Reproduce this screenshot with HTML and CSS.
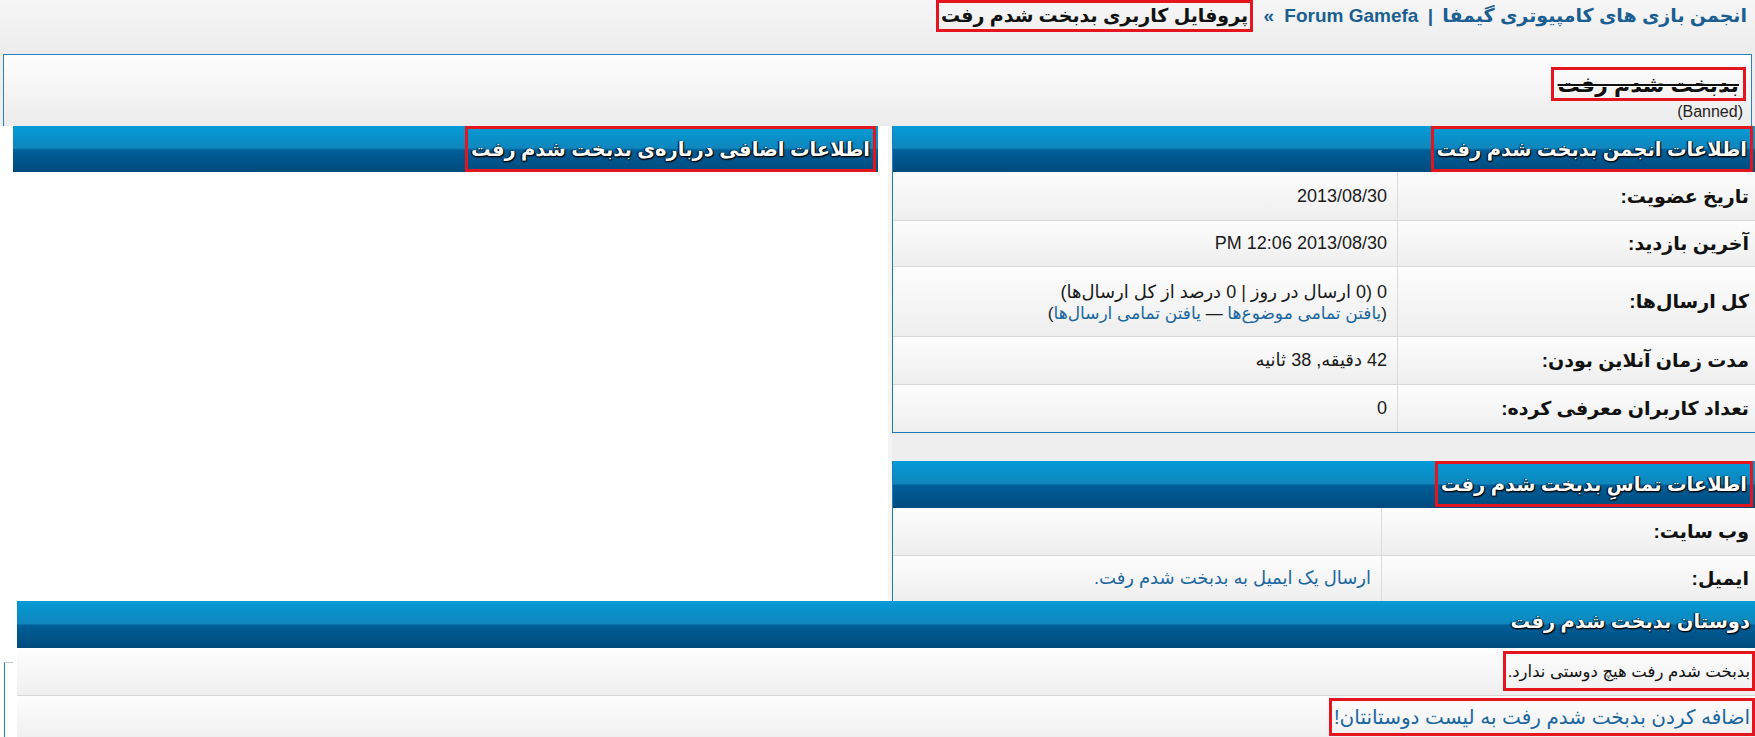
FILE: index.html
```html
<!DOCTYPE html>
<html lang="fa" dir="rtl">
<head>
    <meta charset="UTF-8">
    <title>پروفایل کاربری بدبخت شدم رفت</title>
    <link rel="stylesheet" href="styles.css">
</head>
<body>

<div class="crumbs">
    <a href="#">انجمن بازی های کامپیوتری گیمفا <span class="bar">|</span> Forum Gamefa</a>
    <span class="sep">&raquo;</span>
    <span class="mark current">پروفایل کاربری بدبخت شدم رفت</span>
</div>

<div class="profile">
    <div class="username"><span class="mark">بدبخت شدم رفت</span></div>
    <div class="usertitle">(Banned)</div>
</div>

<div class="columns">
    <div class="col-main">
        <div class="box">
            <div class="thead"><span class="mark">اطلاعات انجمن بدبخت شدم رفت</span></div>
            <div class="row r1">
                <div class="label">تاریخ عضویت:</div>
                <div class="value">2013/08/30</div>
            </div>
            <div class="row r2">
                <div class="label">آخرین بازدید:</div>
                <div class="value">2013/08/30 12:06 PM</div>
            </div>
            <div class="row r3">
                <div class="label">کل ارسال‌ها:</div>
                <div class="value">
                    0 (0 ارسال در روز | 0 درصد از کل ارسال‌ها)
                    <div class="small">(<a href="#">یافتن تمامی موضوع‌ها</a> &mdash; <a href="#">یافتن تمامی ارسال‌ها</a>)</div>
                </div>
            </div>
            <div class="row r4">
                <div class="label">مدت زمان آنلاین بودن:</div>
                <div class="value">42 دقیقه, 38 ثانیه</div>
            </div>
            <div class="row r5">
                <div class="label">تعداد کاربران معرفی کرده:</div>
                <div class="value">0</div>
            </div>
        </div>

        <div class="box contact">
            <div class="thead"><span class="mark">اطلاعات تماسِ بدبخت شدم رفت</span></div>
            <div class="row r6">
                <div class="label">وب سایت:</div>
                <div class="value"></div>
            </div>
            <div class="row r7">
                <div class="label">ایمیل:</div>
                <div class="value"><a href="#">ارسال یک ایمیل به بدبخت شدم رفت.</a></div>
            </div>
        </div>
    </div>

    <div class="col-side">
        <div class="thead"><span class="mark">اطلاعات اضافی درباره‌ی بدبخت شدم رفت</span></div>
    </div>
</div>

<div class="friends">
    <div class="friends-main">
        <div class="thead">دوستان بدبخت شدم رفت</div>
        <div class="frow"><span class="mark">بدبخت شدم رفت هیچ دوستی ندارد.</span></div>
        <div class="frow"><a href="#" class="mark">اضافه کردن بدبخت شدم رفت به لیست دوستانتان!</a></div>
    </div>
    <div class="friends-edge"><div class="edge-line"></div></div>
</div>

</body>
</html>
```

FILE: styles.css
```css
* {
    box-sizing: border-box;
}
body {
    margin: 0;
    padding: 0;
    height: 737px;
    overflow: hidden;
    font-family: "Liberation Sans", "DejaVu Sans", sans-serif;
    color: #111;
    background: #eeeeee;
}
a {
    color: #1a67a0;
    text-decoration: none;
}
.mark {
    border: 3px solid #e3161f;
}

/* breadcrumb */
.crumbs {
    height: 54px;
    padding-right: 8px;
    font-size: 19px;
    font-weight: bold;
    line-height: 26px;
    background: linear-gradient(#f6f6f6, #ececec);
}
.crumbs a {
    color: #1b5f92;
}
.crumbs .bar {
    margin: 0 4px;
}
.crumbs .sep {
    margin: 0 5px;
    color: #1b5f92;
}
.crumbs .current {
    display: inline-block;
    padding: 0 2px;
    color: #111;
}

/* profile header */
.profile {
    height: 72px;
    margin: 0 3px;
    padding: 12px 5px 0 0;
    border: 1px solid #2a7fc0;
    border-bottom: 0;
    background: linear-gradient(#fefefe, #ebebeb);
}
.username {
    font-size: 22px;
    font-weight: bold;
    line-height: 24px;
}
.username .mark {
    display: inline-block;
    padding: 3px 4px 1px;
    text-decoration: line-through;
    text-shadow: 1px 1px 0 #fff;
}
.usertitle {
    margin-top: 2px;
    margin-right: 3px;
    font-size: 16px;
    color: #222;
}

/* two columns */
.columns {
    display: flex;
}
.col-main {
    width: 863px;
    background: #eeeeee;
}
.col-side {
    width: 892px;
    padding: 0 10px 0 13px;
    border-right: 4px solid #f4f4f4;
    background: #ffffff;
}

.thead {
    height: 46px;
    padding-right: 2px;
    color: #fff;
    font-size: 19.5px;
    font-weight: bold;
    line-height: 40px;
    text-shadow: 1px 1px 1px #000, -1px 0 1px #000, 0 1px 2px #000;
    background: linear-gradient(#049bd7 0%, #0f86bd 48%, #005f98 52%, #004a7d 100%);
}
.thead .mark {
    display: inline-block;
    height: 46px;
    padding: 0 3px;
}

.box {
    border: 1px solid #1f78b8;
    border-top: 0;
    border-right: 0;
    background: #fff;
}
.contact {
    margin-top: 28px;
    border-bottom: 0;
}
.contact .thead {
    height: 47px;
}

.row {
    display: flex;
    align-items: center;
    border-bottom: 1px solid #d9d9d9;
    background: linear-gradient(#fdfdfd, #eeeeee);
}
.row .label {
    width: 358px;
    align-self: stretch;
    display: flex;
    align-items: center;
    padding-right: 6px;
    border-left: 1px solid #dcdcdc;
    font-size: 19px;
    font-weight: bold;
}
.row .value {
    flex: 1;
    padding-right: 10px;
    font-size: 18px;
    color: #1a1a1a;
    line-height: 23px;
}
.row .small {
    font-size: 17px;
    line-height: 19px;
}
.r1 { height: 49px; }
.r2 { height: 46px; }
.r3 { height: 70px; }
.r4 { height: 48px; }
.r5 { height: 47px; border-bottom: 0; }
.r6 { height: 48px; }
.r7 { height: 45px; border-bottom: 0; }
.contact .label {
    width: 374px;
}

/* friends */
.friends {
    display: flex;
    background: #ffffff;
}
.friends-main {
    flex: 1;
}
.friends-edge {
    width: 17px;
    padding: 61px 0 0 4px;
    direction: ltr;
}
.edge-line {
    height: 100px;
    width: 9px;
    border-left: 1px solid #2a7fc0;
    border-top: 1px solid #c8c8c8;
}
.friends .thead {
    height: 47px;
    padding-right: 5px;
}
.frow {
    height: 48px;
    padding-top: 3px;
    border-bottom: 1px solid #d6d6d6;
    font-size: 16.5px;
    line-height: 34px;
    background: linear-gradient(#fefefe, #efefef);
}
.frow + .frow {
    height: 43px;
    padding-top: 2px;
    border-bottom: 0;
    font-size: 20px;
    line-height: 32px;
}
.frow .mark {
    display: inline-block;
    padding: 0 2px;
}
```
